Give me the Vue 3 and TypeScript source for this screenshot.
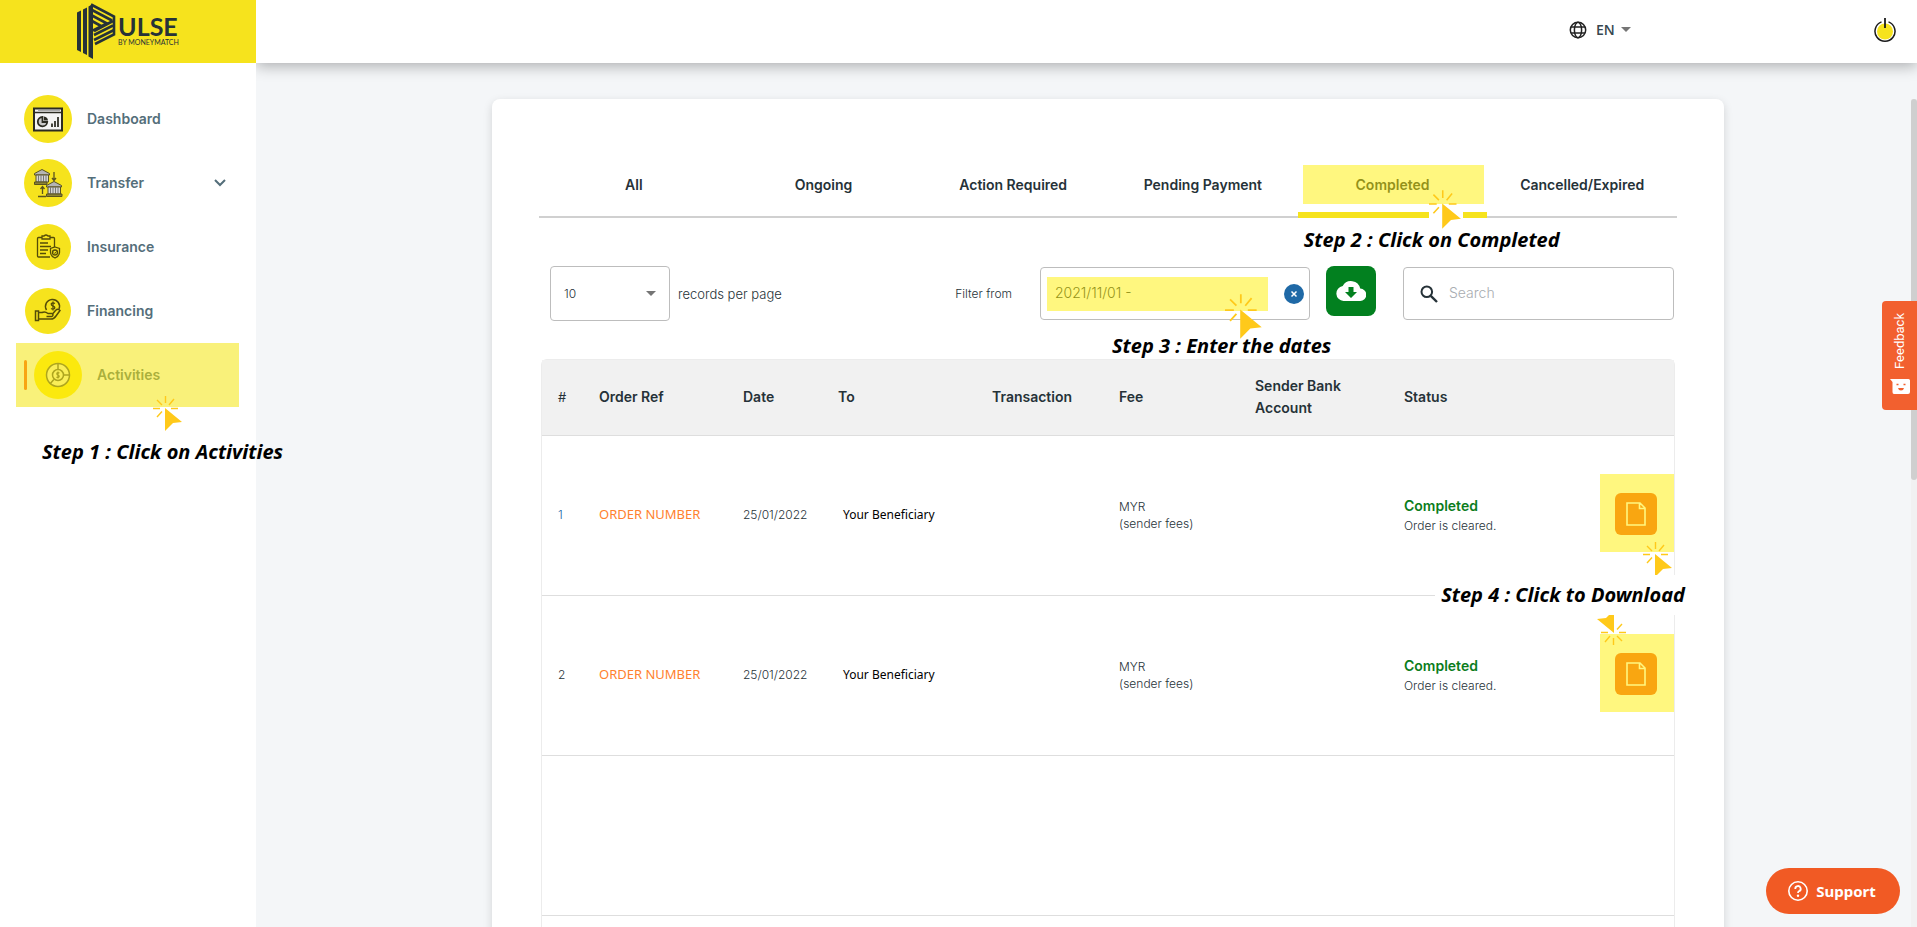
<script setup lang="ts">
import { ref } from 'vue'

interface NavItem {
  label: string
  icon: string
  active?: boolean
  expandable?: boolean
}

interface Order {
  id: number
  ref: string
  date: string
  beneficiary: string
}

const navItems: NavItem[] = [
  { label: 'Dashboard', icon: 'dashboard' },
  { label: 'Transfer', icon: 'transfer', expandable: true },
  { label: 'Insurance', icon: 'insurance' },
  { label: 'Financing', icon: 'financing' },
  { label: 'Activities', icon: 'activities', active: true },
]

const tabs = ['All', 'Ongoing', 'Action Required', 'Pending Payment', 'Completed', 'Cancelled/Expired']
const currentTab = ref('Completed')

const orders: Order[] = [
  { id: 1, ref: 'ORDER NUMBER', date: '25/01/2022', beneficiary: 'Your Beneficiary' },
  { id: 2, ref: 'ORDER NUMBER', date: '25/01/2022', beneficiary: 'Your Beneficiary' },
]

const language = ref('EN')
const pageSize = ref('10')
const dateRange = ref('2021/11/01 -')
const search = ref('')
</script>

<template>
  <div class="page">
    <svg class="symbols" aria-hidden="true">
      <symbol id="click-cursor" viewBox="0 0 30 35">
        <path d="M12 12 L29 26 L20 27 L12 35 Z" fill="#ffc91a" />
        <path
          d="M12.5 0V7M4 4L9 9M21 3L16 9M0 12.5H7M18 12.5H25M4 21L9 15.500"
          stroke="#ffc91a"
          stroke-width="1.4"
          fill="none"
        />
      </symbol>
    </svg>

    <aside class="sidebar">
      <a class="brand" href="#" aria-label="Pulse by MoneyMatch">
        <svg class="brand-mark" viewBox="0 0 39 56" aria-hidden="true">
          <g fill="#263238">
            <path d="M0 9.500 L4 7.500 V49 L0 47Z" />
            <path d="M6 6.500 L10 4.500 V52 L6 50Z" />
            <path d="M11.500 3.500 L16 1 V56 L11.500 53.500Z" />
          </g>
          <g stroke="#263238" stroke-width="2.600" fill="none">
            <path d="M14 1.500 L37 13.500 V31.500 L18 41" />
            <path d="M15 7 L35 17.500" />
            <path d="M15 12.500 L30 20.500 L16 27.500" />
            <path d="M15 18 L24 23" />
            <path d="M36 18 L17 28" />
            <path d="M36 22.500 L17 32" />
            <path d="M37 27 L17 37" />
          </g>
        </svg>
        <span class="brand-text">
          <span class="brand-name">ULSE</span>
          <span class="brand-sub">BY MONEYMATCH</span>
        </span>
      </a>

      <nav class="nav" aria-label="Main">
        <a
          v-for="item in navItems"
          :key="item.label"
          href="#"
          class="nav-item"
          :class="{ active: item.active }"
        >
          <span v-if="item.active" class="marker"></span>
          <svg class="nav-icon" viewBox="0 0 48 48" aria-hidden="true">
            <circle cx="24" cy="24" :r="item.icon === 'insurance' || item.icon === 'financing' ? 23 : 24" fill="#f6e31d" />
            <g v-if="item.icon === 'dashboard'">
              <rect x="10" y="13.500" width="28" height="22" fill="#f4f4f4" stroke="#2b2b22" stroke-width="2" />
              <path d="M10 17.500H38" stroke="#2b2b22" stroke-width="1.500" />
              <path d="M14 15.500H36" stroke="#aaa" stroke-width="1" />
              <path d="M18.500 22A4.700 4.700 0 1 0 23.200 27H18.500Z" fill="#c9c9c9" stroke="#2b2b22" stroke-width="1.800" />
              <path d="M20 21.500A4.500 4.500 0 0 1 24 25.500H20Z" fill="#2b2b22" />
              <path d="M28 32V28.500M31 32V26M34 32V22" stroke="#44443c" stroke-width="2" />
            </g>
            <g v-else-if="item.icon === 'transfer'" stroke="#5a5320" stroke-width="1">
              <path d="M10.500 14.500L18 10.500L25.500 14.500V16H10.500Z" fill="#b5b5b5" />
              <path d="M12 16H24.500V23H12Z" fill="#d5d5d5" />
              <path d="M14.500 16V23M17 16V23M19.500 16V23M22 16V23" stroke="#777" />
              <path d="M10.500 23H23V25.500H10.500Z" fill="#8a8236" />
              <path d="M22.500 26.500L30 22.500L37.500 26.500V28H22.500Z" fill="#b5b5b5" />
              <path d="M24 28H36.500V35H24Z" fill="#d5d5d5" />
              <path d="M26.500 28V35M29 28V35M31.500 28V35M34 28V35" stroke="#777" />
              <path d="M22.500 35H38V37.500H22.500Z" fill="#8a8236" />
              <path d="M30 13V21M28 19L30 21.500L32 19M18.500 35V28M16.500 30L18.500 27.500L20.500 30M14 37.500H22" fill="none" stroke-width="1.300" />
            </g>
            <g v-else-if="item.icon === 'insurance'" fill="none" stroke="#544c08" stroke-width="1.300">
              <path d="M30.500 24V15.500Q30.500 14.500 29.500 14.500H14.500Q13.500 14.500 13.500 15.500V33Q13.500 34 14.500 34H26" />
              <path d="M18 13H20Q22 11 24 13H26V16H18Z" fill="#f6e31d" />
              <path d="M16 20H24M16 23.500H27M16 27H24M16 30.500H22" />
              <path d="M31 24L35.500 25.500V29.500Q35 33.500 31 35Q27 33.500 26.500 29.500V25.500Z" fill="#f6e31d" />
              <circle cx="31" cy="29.500" r="2.500" />
              <path d="M29.800 29.500L30.800 30.500L32.500 28.500" stroke-width="1" />
            </g>
            <g v-else-if="item.icon === 'financing'" fill="none" stroke="#544c08" stroke-width="1.500">
              <path d="M11.500 24H14.500V33.500H11.500Z" />
              <path d="M14.500 25.500H18Q21 24 24 26.500H28Q30 28 28 29.500H22.500" />
              <path d="M14.500 32H27Q30 32 32 29L36 23.500Q34 21 31.500 23.500L28.500 27" />
              <path d="M22.500 23A7 7 0 1 1 35 22" />
              <path d="M31 16.500Q28.500 15 27.200 16.800Q27 18.500 29 19Q31.500 19.800 30.500 21.500Q29 22.800 27 21.500M29 14.500V23.500" stroke-width="1.300" />
            </g>
            <g v-else fill="none" stroke="#5c5a3c" stroke-width="1.500">
              <circle cx="24" cy="24" r="11.500" fill="#f4ecb0" />
              <circle cx="24" cy="24" r="5.500" fill="#f4ecb0" />
              <path d="M24 12V18M30 24H36M19.800 28.500L16 33" />
              <path d="M25.500 22Q23 21 22.800 22.800Q23 24 24.300 24.300Q25.800 25 24.800 26.200Q23.500 26.700 22.500 26M24 20.500V27.500" stroke-width="1.200" />
            </g>
          </svg>
          <span class="nav-label">{{ item.label }}</span>
          <svg v-if="item.expandable" class="chevron" viewBox="0 0 12 8" aria-hidden="true">
            <path d="M1 1L6 6L11 1" fill="none" stroke="#546e7a" stroke-width="2" />
          </svg>
          <template v-if="item.active">
            <span class="highlight nav-highlight"></span>
            <svg class="cursor nav-cursor" aria-hidden="true"><use href="#click-cursor" /></svg>
            <span class="caption nav-caption">Step 1 : Click on Activities</span>
          </template>
        </a>
      </nav>
    </aside>

    <div class="content">
      <header class="topbar">
        <label class="language">
          <svg class="globe" viewBox="0 0 18 18" aria-hidden="true">
            <g fill="none" stroke="#222" stroke-width="1.500">
              <circle cx="9" cy="9" r="7.700" />
              <ellipse cx="9" cy="9" rx="3.600" ry="7.700" />
              <path d="M2 6H16M2 12H16" />
            </g>
          </svg>
          <select v-model="language" aria-label="Language">
            <option>EN</option>
          </select>
          <span class="caret"></span>
        </label>
        <button class="power" type="button" aria-label="Log out">
          <svg viewBox="0 0 22 26" aria-hidden="true">
            <circle cx="11" cy="14.500" r="8" fill="#f6e31d" />
            <path d="M7.500 4.900A10 10 0 1 0 14.500 4.900" fill="none" stroke="#1b1b1b" stroke-width="1.500" />
            <path d="M11 1V11" stroke="#1b1b1b" stroke-width="1.800" />
          </svg>
        </button>
      </header>

      <main class="main">
        <section class="card">
          <div class="tabs" role="tablist">
            <div v-for="tab in tabs" :key="tab" class="tab-slot">
              <button
                type="button"
                role="tab"
                class="tab"
                :class="{ selected: tab === currentTab }"
                :aria-selected="tab === currentTab"
                @click="currentTab = tab"
              >
                {{ tab }}
              </button>
              <template v-if="tab === 'Completed'">
                <span class="highlight tab-highlight"></span>
                <span class="tab-cursor-box">
                  <svg class="cursor-fill" aria-hidden="true"><use href="#click-cursor" /></svg>
                </span>
                <span class="caption tab-caption">Step 2 : Click on Completed</span>
              </template>
            </div>
          </div>

          <div class="filters">
            <label class="page-size">
              <span class="select-box">
                <select v-model="pageSize">
                  <option>10</option>
                </select>
                <span class="caret"></span>
              </span>
              records per page
            </label>
            <div class="filter-group">
              <label class="filter-label" for="range">Filter from</label>
              <div class="field date-field">
                <input id="range" v-model="dateRange" type="text" />
                <button class="clear" type="button" aria-label="Clear dates" @click="dateRange = ''">
                  <svg viewBox="0 0 20 20" aria-hidden="true">
                    <path d="M7.500 7.500L12.500 12.500M12.500 7.500L7.500 12.500" stroke="#fff" stroke-width="1.500" />
                  </svg>
                </button>
                <span class="highlight date-highlight"></span>
                <svg class="cursor date-cursor" aria-hidden="true"><use href="#click-cursor" /></svg>
                <span class="caption date-caption">Step 3 : Enter the dates</span>
              </div>
              <button class="download" type="button" aria-label="Download list">
                <svg viewBox="0 0 30 20" aria-hidden="true">
                  <path
                    d="M24.200 7.600A9.400 9.400 0 0 0 6.700 5.100A7.500 7.500 0 0 0 7.500 20H24A6.200 6.200 0 0 0 24.200 7.600Z"
                    fill="#fff"
                  />
                  <path d="M12.500 6H17.500V11H21L15 17L9 11H12.500Z" fill="#02801f" />
                </svg>
              </button>
              <div class="field search-field">
                <svg viewBox="0 0 18 18" aria-hidden="true">
                  <circle cx="6.800" cy="6.800" r="5.300" fill="none" stroke="#263238" stroke-width="2" />
                  <path d="M10.800 10.800L17 17" stroke="#263238" stroke-width="2.400" />
                </svg>
                <input v-model="search" type="search" placeholder="Search" aria-label="Search" />
              </div>
            </div>
          </div>

          <table class="orders">
            <colgroup>
              <col class="col-index" />
              <col class="col-ref" />
              <col class="col-date" />
              <col class="col-to" />
              <col class="col-transaction" />
              <col class="col-fee" />
              <col class="col-bank" />
              <col />
              <col class="col-action" />
            </colgroup>
            <thead>
              <tr>
                <th class="index" scope="col">#</th>
                <th scope="col">Order Ref</th>
                <th scope="col">Date</th>
                <th scope="col">To</th>
                <th scope="col">Transaction</th>
                <th scope="col">Fee</th>
                <th scope="col">Sender Bank Account</th>
                <th scope="col">Status</th>
                <th scope="col" aria-label="Receipt"></th>
              </tr>
            </thead>
            <tbody>
              <tr v-for="order in orders" :key="order.id">
                <td :class="{ first: order.id === 1 }">{{ order.id }}</td>
                <td><a class="order-ref" href="#">{{ order.ref }}</a></td>
                <td>{{ order.date }}</td>
                <td class="beneficiary">{{ order.beneficiary }}</td>
                <td></td>
                <td>MYR<br />(sender fees)</td>
                <td></td>
                <td class="state">
                  <strong class="status">Completed</strong>
                  <span class="status-note">Order is cleared.</span>
                </td>
                <td class="action">
                  <button class="receipt" type="button" aria-label="Download receipt">
                    <svg viewBox="0 0 20 24" aria-hidden="true">
                      <path d="M1 1H14L19 6V23H1Z M13.500 1V6.500H19" fill="none" stroke="#fff" stroke-width="1.600" />
                    </svg>
                  </button>
                  <span class="highlight receipt-highlight"></span>
                  <svg v-if="order.id === 1" class="cursor receipt-cursor" aria-hidden="true">
                    <use href="#click-cursor" />
                  </svg>
                  <svg v-else class="cursor receipt-cursor flipped" aria-hidden="true">
                    <use href="#click-cursor" />
                  </svg>
                  <span v-if="order.id === 1" class="caption receipt-caption">Step 4 : Click to Download</span>
                </td>
              </tr>
              <tr v-for="n in 2" :key="`empty-${n}`">
                <td colspan="9"></td>
              </tr>
            </tbody>
          </table>
        </section>
        <div class="scroll-track"><div class="scroll-thumb"></div></div>
      </main>
    </div>

    <button class="feedback" type="button">
      <span>Feedback</span>
      <svg viewBox="0 0 20 15" aria-hidden="true">
        <path d="M0 0H18.500Q20 0 20 1.500V13Q20 15 18 15H4Q2.500 15 2.500 13V3Z" fill="#fff" />
        <path d="M6.500 5.500H8.500M13.500 5.500H15.500" stroke="#f2602f" stroke-width="1.600" />
        <path d="M8 9H14Q13.500 11.500 11 11.500Q8.500 11.500 8 9Z" fill="#f2602f" />
      </svg>
    </button>

    <button class="support" type="button">
      <svg viewBox="0 0 20 20" aria-hidden="true">
        <circle cx="10" cy="10" r="9.200" fill="none" stroke="#fff" stroke-width="1.600" />
        <path d="M7.300 8A2.700 2.700 0 1 1 11 10.200Q10 10.700 10 12" fill="none" stroke="#fff" stroke-width="1.800" />
        <circle cx="10" cy="14.800" r="1.200" fill="#fff" />
      </svg>
      <span>Support</span>
    </button>
  </div>
</template>

<style>
body {
  margin: 0;
  overflow: hidden;
}
</style>

<style scoped>
* {
  box-sizing: border-box;
}

.page {
  display: flex;
  height: 100vh;
  overflow: hidden;
  background: #f4f6f8;
  color: #263238;
  font-family: Inter, 'Noto Sans', sans-serif;
  font-size: 13px;
  font-weight: 300;
}

button,
input,
select {
  font: inherit;
  color: inherit;
  border: 0;
  padding: 0;
  background: none;
  outline: none;
}

button {
  cursor: pointer;
}

select {
  appearance: none;
}

a {
  color: inherit;
  text-decoration: none;
}

.symbols {
  position: absolute;
  width: 0;
  height: 0;
}

/* Sidebar */
.sidebar {
  position: relative;
  z-index: 3;
  flex: 0 0 256px;
  background: #fff;
}

.brand {
  display: flex;
  justify-content: center;
  gap: 2px;
  height: 63px;
  padding-top: 3px;
  background: #f6e31d;
  color: #263238;
  font-family: Lato, sans-serif;
}

.brand-mark {
  width: 39px;
  height: 56px;
}

.brand-text {
  display: flex;
  flex-direction: column;
  padding-top: 8px;
}

.brand-name {
  font-size: 25px;
  font-weight: 700;
  line-height: 30px;
}

.brand-sub {
  margin-top: -3px;
  font-size: 7px;
  font-weight: 400;
  line-height: 8px;
}

.nav {
  display: flex;
  flex-direction: column;
  padding: 24px 17px 0 16px;
}

.nav-item {
  position: relative;
  display: flex;
  align-items: center;
  gap: 15px;
  height: 64px;
  padding: 0 13px 0 8px;
  color: #546e7a;
  font-size: 14px;
  font-weight: 600;
}

.nav-item.active {
  background: #f2f3f5;
}

.nav-label {
  padding-bottom: 1px;
}

.marker {
  width: 3px;
  height: 30px;
  margin-right: -8px;
  border-radius: 2px;
  background: #f15a24;
}

.nav-icon {
  flex: none;
  width: 48px;
  height: 48px;
}

.chevron {
  width: 12px;
  height: 8px;
  margin-left: auto;
}

/* Walkthrough overlays */
.highlight,
.cursor,
.caption,
.tab-cursor-box {
  position: absolute;
  z-index: 2;
  pointer-events: none;
}

.highlight {
  background: rgba(255, 240, 0, 0.5);
}

.cursor {
  width: 30px;
  height: 35px;
}

.caption {
  color: #000;
  font-family: 'Noto Sans', 'Open Sans', sans-serif;
  font-size: 20px;
  font-style: italic;
  font-weight: 700;
  line-height: 24px;
  white-space: nowrap;
}

.nav-highlight {
  inset: 0;
}

.nav-cursor {
  top: 53px;
  left: 137px;
}

.nav-caption {
  top: 97px;
  left: 26px;
}

.tab-highlight {
  inset: 12px 3px 14px 5px;
}

.tab-cursor-box {
  top: 37px;
  left: 131px;
  width: 34px;
  height: 39px;
  background: linear-gradient(transparent 16px, #fff 16px);
}

.cursor-fill {
  width: 33px;
  height: 39px;
}

.tab-caption {
  top: 75px;
  left: 6px;
}

.date-highlight {
  top: 9px;
  bottom: 8px;
  left: 6px;
  width: 221px;
}

.date-cursor {
  top: 26px;
  left: 184px;
  width: 38px;
  height: 45px;
}

.date-caption {
  top: 66px;
  left: 71px;
}

.receipt-highlight {
  top: 38px;
  left: 1px;
  width: 74px;
  height: 78px;
}

.receipt-cursor {
  top: 106px;
  right: 1px;
}

.receipt-cursor.flipped {
  top: 14px;
  right: 48px;
  transform: rotate(180deg);
}

.receipt-caption {
  z-index: 3;
  top: 139px;
  right: -15px;
  padding: 8px 4px 8px 6px;
  background: #fff;
}

/* Top bar */
.content {
  display: flex;
  flex: 1;
  flex-direction: column;
  min-width: 0;
}

.topbar {
  position: relative;
  z-index: 2;
  display: flex;
  flex: none;
  align-items: center;
  justify-content: flex-end;
  gap: 243px;
  height: 63px;
  padding: 0 21px 4px 0;
  background: #fff;
  box-shadow: 0 3px 14px rgba(0, 0, 0, 0.3);
}

.language {
  display: flex;
  align-items: center;
  color: #37474f;
  font-family: 'Open Sans', sans-serif;
  font-size: 14px;
  font-weight: 600;
}

.language select {
  width: 25px;
  margin-left: 9px;
}

.globe {
  width: 18px;
  height: 18px;
}

.caret {
  border: 5px solid transparent;
  border-top-color: #757575;
  border-bottom-width: 0;
  pointer-events: none;
}

.power svg {
  display: block;
  width: 22px;
  height: 26px;
}

/* Activity card */
.main {
  position: relative;
  flex: 1;
  min-height: 0;
  padding: 36px 193px 0 236px;
}

.card {
  padding: 54px 47px 48px;
  border-radius: 8px;
  background: #fff;
  box-shadow: 0 3px 10px rgba(0, 0, 0, 0.14);
}

.tabs {
  display: flex;
  height: 65px;
  border-bottom: 2px solid #d0d0d0;
}

.tab-slot {
  position: relative;
  flex: 1 1 0;
  height: 65px;
}

.tab {
  width: 100%;
  height: 100%;
  border-bottom: 6px solid transparent;
  border-top: 4px solid transparent;
  font-size: 14px;
  font-weight: 600;
}

.tab.selected {
  border-bottom-color: #f6e31d;
}

.filters {
  display: flex;
  justify-content: space-between;
  margin-top: 48px;
  padding: 0 3px 0 11px;
}

.page-size {
  display: flex;
  align-items: center;
  gap: 8px;
}

.select-box {
  position: relative;
  display: flex;
  align-items: center;
  width: 120px;
  height: 55px;
  border: 1px solid #bdbdbd;
  border-radius: 4px;
}

.select-box select {
  width: 100%;
  height: 100%;
  padding-left: 13px;
  font-size: 12px;
}

.select-box .caret {
  position: absolute;
  right: 13px;
}

.filter-group {
  display: flex;
  align-items: center;
}

.filter-label {
  margin-right: 28px;
  font-size: 12px;
}

.field {
  position: relative;
  display: flex;
  align-items: center;
  height: 53px;
  border: 1px solid #bdbdbd;
  border-radius: 4px;
  font-size: 14px;
}

.field input {
  flex: 1;
  min-width: 0;
  height: 100%;
  padding-bottom: 2px;
}

.date-field {
  width: 270px;
  padding: 0 5px 0 14px;
}

.clear {
  width: 20px;
  height: 20px;
  border-radius: 50%;
  background: #1f69a6;
}

.clear svg {
  display: block;
}

.download {
  display: grid;
  place-items: center;
  align-self: flex-start;
  width: 50px;
  height: 50px;
  margin: 0 27px 0 16px;
  border-radius: 8px;
  background: #02801f;
}

.download svg {
  width: 30px;
  height: 20px;
}

.search-field {
  width: 271px;
  gap: 11px;
  padding: 0 16px;
}

.search-field svg {
  width: 18px;
  height: 18px;
}

.search-field input::placeholder {
  color: #a9adb1;
  opacity: 1;
}

/* Orders table */
.orders {
  width: calc(100% - 4px);
  margin: 38px 2px 0;
  border: 1px solid #ececec;
  border-radius: 6px;
  border-spacing: 0;
  table-layout: fixed;
}

.col-index {
  width: 41px;
}

.col-ref {
  width: 144px;
}

.col-date {
  width: 95px;
}

.col-to {
  width: 154px;
}

.col-transaction {
  width: 127px;
}

.col-fee {
  width: 136px;
}

.col-bank {
  width: 149px;
}

.col-action {
  width: 75px;
}

.orders th,
.orders td {
  padding: 0 0 2px 16px;
  border-bottom: 1px solid #dedede;
  text-align: left;
  vertical-align: middle;
}

.orders th {
  height: 76px;
  background: #f1f1f1;
  font-size: 14px;
  font-weight: 600;
  line-height: 22px;
}

.orders th.index {
  font-size: 13px;
  font-weight: 400;
}

.orders td {
  height: 160px;
  font-size: 12px;
  line-height: 17px;
}

.orders td.first {
  color: #1f69a6;
}

.order-ref {
  color: #ff812e;
  font-family: 'Noto Sans', sans-serif;
  font-size: 13px;
  font-weight: 400;
}

.orders td.beneficiary {
  padding-left: 21px;
  color: #000;
  font-family: 'Noto Sans', sans-serif;
  font-size: 12px;
  font-weight: 400;
}

.orders td.state {
  padding-bottom: 0;
}

.status,
.status-note {
  display: block;
  line-height: 20px;
}

.status {
  color: #0b7d1c;
  font-size: 14px;
  font-weight: 600;
}

.orders td.action {
  position: relative;
  padding-bottom: 4px;
}

.receipt {
  display: grid;
  place-items: center;
  width: 42px;
  height: 42px;
  border-radius: 6px;
  background: #f25c22;
}

.receipt svg {
  width: 20px;
  height: 24px;
}

/* Floating page furniture */
.scroll-track {
  position: absolute;
  top: 36px;
  right: 0;
  bottom: 0;
  width: 6px;
  background: #f1f1f2;
}

.scroll-thumb {
  height: 46%;
  border-radius: 3px;
  background: #cfcfcf;
}

.feedback {
  position: absolute;
  z-index: 4;
  top: 301px;
  right: 0;
  display: flex;
  flex-direction: column;
  align-items: center;
  justify-content: center;
  gap: 10px;
  width: 35px;
  height: 109px;
  padding-bottom: 4px;
  border-radius: 4px 0 0 4px;
  background: #f2602f;
  color: #fff;
  font-family: Roboto, sans-serif;
  font-size: 13px;
  font-weight: 400;
}

.feedback span {
  writing-mode: vertical-rl;
  transform: rotate(180deg);
}

.feedback svg {
  width: 20px;
  height: 15px;
}

.support {
  position: absolute;
  z-index: 4;
  right: 17px;
  bottom: 13px;
  display: flex;
  align-items: center;
  justify-content: center;
  gap: 8px;
  width: 134px;
  height: 46px;
  padding-right: 2px;
  border-radius: 23px;
  background: #f15a24;
  color: #fff;
  font-family: 'Noto Sans', 'Open Sans', sans-serif;
  font-size: 15px;
  font-weight: 700;
}

.support svg {
  width: 20px;
  height: 20px;
}
</style>
